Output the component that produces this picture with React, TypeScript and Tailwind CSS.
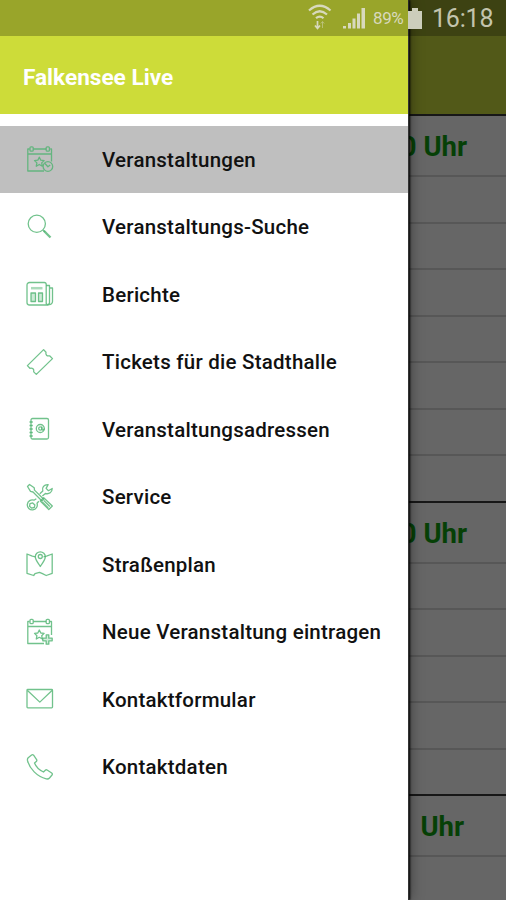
import type { ReactNode } from 'react';

const iconPaths: Record<string, ReactNode> = {
  events: (
    <>
      <path d="M3.500 4H1.800v22H18M25.500 16.500V4h-1.300M7.500 4h12.500M1.800 9h23.700" />
      <rect x="4" y="1.800" width="3.200" height="4.400" rx="1" />
      <rect x="20.200" y="1.800" width="3.200" height="4.400" rx="1" />
      <path d="m13.300 12.200 1.500 3 3.300.4-2.400 2.300.6 3.300-3-1.700-3 1.700.6-3.300-2.400-2.300 3.300-.4z" />
      <circle cx="21.900" cy="21.500" r="4.800" />
      <path d="m19 18.500 2.900 3.300 2.300-1.800" />
    </>
  ),
  search: (
    <>
      <circle cx="10.800" cy="10.800" r="8.600" />
      <path d="m17.200 17.200 1.800 1.800" />
      <path d="m17.800 17.800 6.700 6.700" strokeWidth="2.300" />
    </>
  ),
  news: (
    <>
      <path d="M3.500 2.500h14.700a2 2 0 0 1 2 2v18.500a2 2 0 0 0 2 2H3.500a2.500 2.500 0 0 1-2.500-2.500V5a2.500 2.500 0 0 1 2.500-2.500z" />
      <path d="M20.200 5.500h3.300v17a2 2 0 0 1-2 2M23.500 8h3v13.500a3 3 0 0 1-3.500 3" />
      <path d="M5 8.200h11.500" strokeWidth="2.500" opacity=".6" />
      <path d="M5 13h4.500v8.500H5zM12.500 13h4v8.500h-4z" fill="currentColor" fillOpacity=".35" />
    </>
  ),
  ticket: (
    <path d="M17.600 1.600 20 4.200c-.7 2.700 1 4.200 3.600 3.600l2.900 2.800L10.300 26.400l-2.600-2.500c.6-2.800-1.100-4.300-3.800-3.600l-2.500-2.700z" />
  ),
  addresses: (
    <>
      <rect x="5" y="3.500" width="17.500" height="20.500" rx="1.500" />
      <path d="M3.500 7h3.300M3.500 10.500h3.300M3.500 14h3.300M3.500 17.500h3.300M3.500 21h3.300" />
      <circle cx="14.300" cy="13.500" r="4" />
      <circle cx="14.300" cy="13.500" r="1.600" />
      <path d="M15.900 11.500v2.600c0 1.500 2.400 1 2.400-.6" />
    </>
  ),
  service: (
    <>
      <path d="m1.500 3.500 2-2 4.700 3.300.3 2.300 9.200 9.200-1.700 1.700-9-9-2.500-.6z" />
      <path d="M17.700 14.800 26.300 23l-3.500 3.500-8.500-8.500zM17.800 17.500l6 6M16.300 19l6 6" />
      <path d="m16.400 13 3-2.500c3.700 1 6.800-1.200 6.800-5l-3.700 2.200-2.400-2.300 2-3.800c-4-.3-6.500 3-5.300 6.400l-3 2.700" />
      <path d="M10.300 15.800 8 17.200a5 5 0 1 0 3 3l1.800-1.900" />
      <path d="m4 20.700 2.700-.8 2.200 2-.6 2.600-2.800.6-2-1.800z" />
    </>
  ),
  map: (
    <>
      <path d="m9.500 6.800-3.200-.6L1 4v19.300l6.700 2.200 1.300-1.800 4.500-1.400 3 1.400 3.700 1.800 6-2.200V4l-5.700 2.200-3 .6" />
      <path d="M14.300 16.500c-1-2.300-5-6-5-9.700a5 5 0 0 1 10 0c0 3.700-4 7.400-5 9.700z" />
      <circle cx="14.300" cy="6.500" r="2" />
    </>
  ),
  addEvent: (
    <>
      <path d="M3.500 3.500H1.800v22H18M25.500 17V3.500h-1.700M7.500 3.500h12.500M1.800 8.500h23.700" />
      <rect x="4" y="1.300" width="3.200" height="4.400" rx="1" />
      <rect x="20.200" y="1.300" width="3.200" height="4.400" rx="1" />
      <path d="m13.300 12 1.500 3 3.300.4-2.400 2.300.6 3.300-3-1.700-3 1.700.6-3.300-2.400-2.300 3.300-.4z" />
      <path d="M20.200 16.800h2.600v3.400h3.400v2.600h-3.400v3.400h-2.600v-3.400h-3.400v-2.600h3.400z" fill="currentColor" fillOpacity=".3" />
    </>
  ),
  mail: (
    <>
      <rect x="1" y="4.500" width="25.500" height="18.300" rx=".8" />
      <path d="m1.500 5.500 12.300 11.600L26 5.500" />
    </>
  ),
  phone: (
    <path d="M2.200 4.800 5.600 2c.7-.5 1.400-.4 2 .2l3 4.400c.4.700.3 1.400-.3 2L8.500 10c1.500 3.700 5.300 7.300 9 9l1.800-1.800c.5-.5 1.200-.6 1.800-.2l4.600 3c.7.500.8 1.300.3 2L23.500 25c-.8.900-2 1.200-3.200.9C11 23.500 3.500 15.700 1.500 7.500c-.2-1 0-2 .7-2.700z" />
  ),
};

const menuItems = [
  { label: 'Veranstaltungen', icon: 'events', active: true },
  { label: 'Veranstaltungs-Suche', icon: 'search' },
  { label: 'Berichte', icon: 'news' },
  { label: 'Tickets für die Stadthalle', icon: 'ticket' },
  { label: 'Veranstaltungsadressen', icon: 'addresses' },
  { label: 'Service', icon: 'service' },
  { label: 'Straßenplan', icon: 'map' },
  { label: 'Neue Veranstaltung eintragen', icon: 'addEvent' },
  { label: 'Kontaktformular', icon: 'mail' },
  { label: 'Kontaktdaten', icon: 'phone' },
];

const sections = [
  { time: '20:00 Uhr', rows: 7, pad: 'pr-[39px]' },
  { time: '20:00 Uhr', rows: 5, pad: 'pr-[39px]' },
  { time: 'Uhr', rows: 2, pad: 'pr-[42px]' },
];

function MenuIcon({ name }: { name: string }) {
  return (
    <svg
      className="h-7 w-7 flex-none text-[#4db36f]/80"
      viewBox="0 0 28 28"
      fill="none"
      stroke="currentColor"
      strokeWidth="1.300"
      strokeLinejoin="round"
      aria-hidden="true"
    >
      {iconPaths[name]}
    </svg>
  );
}

function StatusBar() {
  return (
    <header className="absolute inset-x-0 top-0 flex h-9 items-center bg-black/25 text-[#d8d9bd]">
      <svg className="ml-[308px] h-7 w-6 flex-none" viewBox="0 0 24 28" fill="none" stroke="currentColor" strokeWidth="2.200">
        <path d="M1 6.500Q11.700-3 22.500 6.500M4.500 10.500q7.200-6.500 14.500 0M8 14.200q3.800-3.300 7.500 0" />
        <path d="M9.500 17v7M7 21.500l2.500 3 2.500-3" strokeWidth="1.700" />
        <path d="M14.500 24v-6M12.800 19.500l1.700-2 1.700 2" strokeWidth="1" opacity=".5" />
      </svg>
      <svg className="ml-[11px] h-[22px] w-[23px] flex-none" viewBox="0 0 23 22" fill="currentColor">
        <path d="M0 19h3v2.500H0zM5 16h3v5.500H5zM9.500 11.500h3v10h-3zM14 6.500h3v15h-3zM18.500 1h3.500v20.500h-3.500z" />
      </svg>
      <span className="ml-[7px] w-[31px] whitespace-nowrap pt-[2px] text-[17px] tracking-[-0.4px]">89%</span>
      <svg className="ml-[4px] h-[23px] w-[14px] flex-none text-[#cccdbb]" viewBox="0 0 14 23" fill="currentColor">
        <path d="M4 1h6v3h4v18H0V4h4z" />
      </svg>
      <span className="ml-[10px] whitespace-nowrap pt-[2px] text-[25px] tracking-[-0.2px] text-[#c3c4ad]">16:18</span>
    </header>
  );
}

function Schedule() {
  return (
    <main className="flex h-full flex-col overflow-hidden bg-[#666]">
      <div className="h-[114px] flex-none bg-[#525918]" />
      {sections.map((section, i) => (
        <section key={i} className="flex-none border-t-2 border-[#171717]">
          <h2 className={`flex h-[59px] items-center justify-end pt-[3px] text-[27.500px] font-bold text-[#064006] ${section.pad}`}>
            {section.time}
          </h2>
          {Array.from({ length: section.rows }, (_, row) => (
            <div key={row} className="h-[46.500px] border-t-2 border-[#575757]" />
          ))}
        </section>
      ))}
    </main>
  );
}

function Drawer() {
  return (
    <aside className="absolute inset-y-0 left-0 w-[409px] border-r border-[#333] bg-white shadow-[1px_0_2px_#000,2px_0_12px_rgba(0,0,0,0.35)]">
      <div className="flex h-[114px] items-center bg-[#cddc39] pt-[41px] pl-[23px]">
        <h1 className="text-[22.600px] font-bold whitespace-nowrap text-white">Falkensee Live</h1>
      </div>
      <nav className="pt-[11.500px]">
        {menuItems.map((item) => (
          <a
            key={item.label}
            className={`flex h-[67.500px] items-center gap-[48px] pl-[26px] ${item.active ? 'bg-[#bfbfbf]' : ''}`}
          >
            <MenuIcon name={item.icon} />
            <span className="whitespace-nowrap pt-[2px] text-[20.500px] font-medium tracking-[0.240px] text-[#111]">
              {item.label}
            </span>
          </a>
        ))}
      </nav>
    </aside>
  );
}

export default function App() {
  return (
    <div className="relative h-[900px] w-[506px] overflow-hidden font-[Roboto,sans-serif]">
      <Schedule />
      <Drawer />
      <StatusBar />
    </div>
  );
}
